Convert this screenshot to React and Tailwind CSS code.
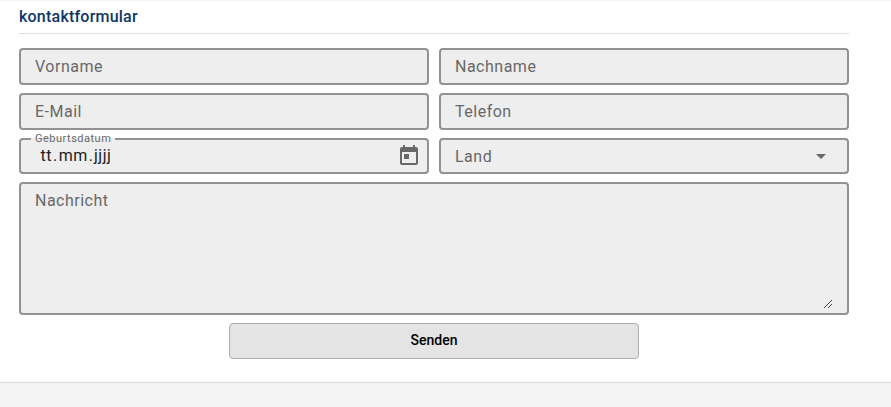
const boxBase =
  "rounded-[4px] border-2 border-[#929292] bg-[#eeeeee] px-3.5 text-base tracking-[0.5px] text-[#686868]";

function Field({ label, children }) {
  return (
    <div className={`${boxBase} flex h-full items-center justify-between`}>
      <span className="leading-6">{label}</span>
      {children}
    </div>
  );
}

function DateField() {
  return (
    <div className={`${boxBase} relative flex h-full items-center justify-between pr-1.5`}>
      <span className="absolute -top-0.5 left-2.5 h-0.5 w-[84px] bg-[#eeeeee]" />
      <span className="absolute -top-2 left-3.5 text-[11px] leading-[14px] tracking-[0.5px]">
        Geburtsdatum
      </span>
      <span className="flex pl-[5.5px] leading-6 text-[#212121]">
        <span>tt</span>
        <span className="pl-px">.</span>
        <span className="pl-px">mm</span>
        <span className="pl-px">.</span>
        <span className="pl-[0.5px]">jjjj</span>
      </span>
      <svg className="size-6 shrink-0" viewBox="0 0 24 24" fill="#686868">
        <path d="M19 3h-1V1h-2v2H8V1H6v2H5c-1.11 0-1.99.9-1.99 2L3 19c0 1.1.89 2 2 2h14c1.1 0 2-.9 2-2V5c0-1.1-.9-2-2-2zm0 16H5V8h14v11zM7 10h5v5H7z" />
      </svg>
    </div>
  );
}

export default function App() {
  return (
    <div className="flex h-[407px] w-full flex-col overflow-hidden border-t border-[#f4f4f4] bg-white font-['Roboto',sans-serif]">
      <main className="ml-[19px] flex w-[830px] flex-1 flex-col">
        <h1 className="h-[33px] border-b border-[#dedede] pt-1 text-base leading-6 font-medium tracking-[0.22px] text-[#0e3767]">
          kontaktformular
        </h1>
        <form className="mt-3.5 grid grid-cols-2 grid-rows-[37px_37px_36px_133px_36px] gap-x-2.5 gap-y-2">
          <Field label="Vorname" />
          <Field label="Nachname" />
          <Field label="E-Mail" />
          <Field label="Telefon" />
          <DateField />
          <Field
            label={<span className="block pt-0.5">Land</span>}
          >
            <svg className="size-6" viewBox="0 0 24 24" fill="#686868">
              <path d="M7 10l5 5 5-5z" />
            </svg>
          </Field>
          <div className={`${boxBase} col-span-2 flex justify-between pt-[5px]`}>
            <span className="leading-6">Nachricht</span>
            <svg
              className="mb-1 size-[9px] self-end"
              viewBox="0 0 9 9"
              stroke="#444"
              strokeWidth="1"
              shapeRendering="crispEdges"
            >
              <path d="M0 8L8 0M4 8L8 4" />
            </svg>
          </div>
          <button
            type="button"
            className="col-span-2 w-[410px] justify-self-center rounded-[4px] border border-[#adadad] bg-[#e4e4e4] pb-0.5 text-sm font-medium text-black"
          >
            Senden
          </button>
        </form>
      </main>
      <footer className="h-[25px] border-t border-[#d8d8d8] bg-[#f4f4f4]" />
    </div>
  );
}
